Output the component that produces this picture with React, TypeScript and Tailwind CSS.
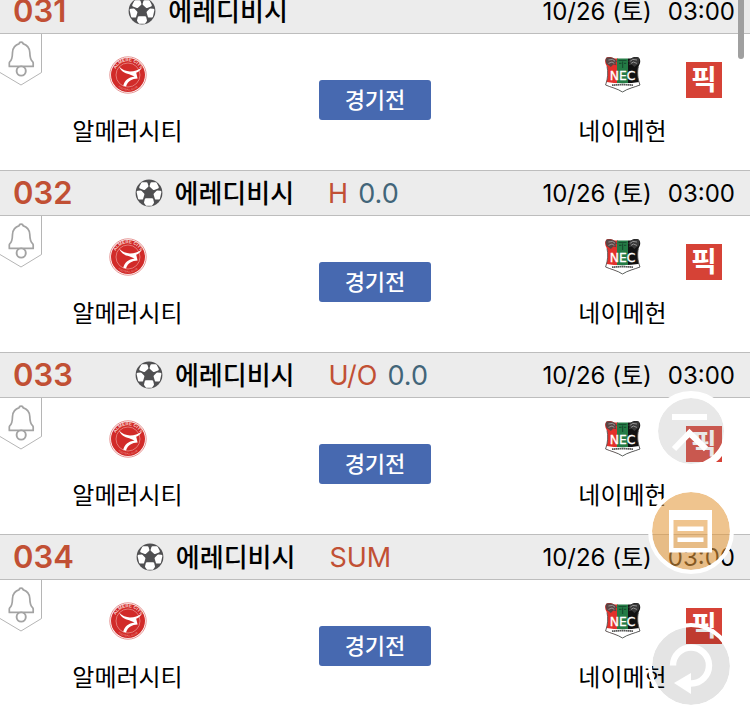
import React from 'react';

type Match = {
  no: string;
  type?: string;
  line?: string;
};

const matches: Match[] = [
  { no: '031' },
  { no: '032', type: 'H', line: '0.0' },
  { no: '033', type: 'U/O', line: '0.0' },
  { no: '034', type: 'SUM' },
];

const SoccerBall = () => (
  <svg viewBox="0 0 28 28" className="h-7 w-7 shrink-0" aria-hidden="true">
    <circle cx="14" cy="14" r="13.4" fill="#505052" />
    <g stroke="#fff" strokeWidth="2.4" strokeLinejoin="round" fill="#fff">
      <path d="M7.4 4.4 11.4 4.4 12.2 7.2 9.2 9.8 5.4 8.4Z" />
      <path d="M20.6 4.4 16.6 4.4 15.8 7.2 18.8 9.8 22.6 8.4Z" />
      <path d="M2.8 13 5.8 12.8 8.2 15.4 7 19.4 4.2 19.2Z" />
      <path d="M25.2 13 22.2 12.8 19.8 15.4 21 19.4 23.8 19.2Z" />
      <path d="M11 20.4H17L17.8 23.6 16.4 25.6H11.6L10.2 23.6Z" />
    </g>
  </svg>
);

const AlarmTag = () => (
  <button type="button" aria-label="알림" className="block h-[52px] w-[42px]">
    <svg viewBox="0 0 42 52" className="h-full w-full" fill="none">
      <path d="M41.5 0V38.5L21 51 0 38.5" stroke="#b5b5b5" />
      <path
        d="M19.3 9.6C19.3 7.6 22.9 7.6 22.9 9.6C27 10.8 29.6 13.8 29.8 18.5C29.9 23.5 30.6 26 32.6 27.6Q33.2 28.2 33.2 29V32.4H9.3V29Q9.3 28.2 9.9 27.6C11.9 26 12.4 23.5 12.5 18.5C12.7 13.8 15.2 10.8 19.3 9.6Z"
        stroke="#a3a3a3"
        strokeWidth="1.7"
        strokeLinejoin="round"
      />
      <circle cx="21.2" cy="37" r="4.6" stroke="#a3a3a3" strokeWidth="1.9" fill="#fff" />
    </svg>
  </button>
);

const AlmereLogo = () => (
  <svg viewBox="0 0 38 38" className="h-[38px] w-[38px]" role="img" aria-label="Almere City">
    <defs>
      <path id="almere-top" d="M5.3 19A13.7 13.7 0 0 1 32.7 19" />
      <path id="almere-bottom" d="M3.4 19A15.6 15.6 0 0 0 34.6 19" />
    </defs>
    <circle cx="19" cy="19" r="18.2" fill="#fff" stroke="#e07a78" strokeWidth=".8" />
    <circle cx="19" cy="19" r="17" fill="#d12b29" />
    <circle cx="19" cy="19" r="12" fill="none" stroke="#eb9c99" strokeWidth=".7" />
    <text fill="#f8d3d1" fontSize="4.5" fontFamily="Liberation Sans, sans-serif" fontWeight="bold">
      <textPath href="#almere-top" startOffset="50%" textAnchor="middle">
        ALMERE CITY
      </textPath>
    </text>
    <text fill="#ee9f9c" fontSize="2.6" fontFamily="Liberation Sans, sans-serif">
      <textPath href="#almere-bottom" startOffset="50%" textAnchor="middle">
        FOOTBALL CLUB
      </textPath>
    </text>
    <path
      d="M10 10.6C13.4 14.2 17 15.4 21 15.4C25.4 15.4 29 14.2 33 11.4C31.6 14 29.6 15.8 27.2 16.8L28.6 22.6C23 22.8 19 25 17 30.4L14.2 29.8C15.6 24.8 19 21.4 25.6 20.6L20.2 18.2C15.4 17.4 12 15.2 10 10.6Z"
      fill="#fff"
    />
  </svg>
);

const NecLogo = () => (
  <svg viewBox="0 0 38 38" className="h-[38px] w-[38px]" role="img" aria-label="NEC Nijmegen">
    <defs>
      <clipPath id="nec">
        <path d="M3 1.2C6 .6 8.6 1.2 10 2.5H27C28.4 1.2 31 .6 34 1.2C37 3 36.8 7 34.4 10.4C33.2 16 33.4 22 36 29C30 31.4 24 32.4 18.5 36C13 32.4 7 31.4 1.6 29C4 22 4.2 16 3 10.4C.6 7 .4 3 3 1.2Z" />
      </clipPath>
    </defs>
    <g clipPath="url(#nec)">
      <rect width="14" height="38" fill="#e3302b" />
      <rect x="13" width="11" height="38" fill="#247b45" />
      <rect x="24" width="14" height="38" fill="#111" />
      <path d="M0 25.5Q18.5 29 38 25.5V38H0Z" fill="#fff" />
    </g>
    <path d="M2.6 1.6Q8 .4 11 3L13 5.4 11.4 6.8 12.6 9.2 9.4 8.6 6.8 11 5 9.4 2.6 8Q.6 4 2.6 1.6Z" fill="#5a4444" />
    <path d="M34.6 1.6Q29 .4 26.2 3L24.2 5.4 25.8 6.8 24.6 9.2 27.8 8.6 30.4 11 32.2 9.4 34.6 8Q36.6 4 34.6 1.6Z" fill="#383838" />
    <path d="M4.4 4 8.6 3.4 11 5.2M4.5 7.4 8 6 10.3 7.4M33 4 28.8 3.4 26.2 5.2M32.9 7.4 29.4 6 27.1 7.4" stroke="#a9a9a9" strokeWidth=".8" fill="none" />
    <path d="M14.5 4.5H22.5M15 7.4H17.5M20 7.4H22.2M18.6 5.5V12" stroke="#174f30" strokeWidth="1.2" />
    <path d="M3 10.4C4.2 16 4 22 1.6 29C7 31.4 13 32.4 18.5 36C24 32.4 30 31.4 36 29C33.4 22 33.2 16 34.4 10.4" stroke="#555" strokeWidth=".9" fill="none" />
    <path d="M8 29.2Q18.5 28.2 29 29.2" stroke="#555" strokeWidth="1.7" strokeDasharray="1.6 .4" fill="none" />
    <text x="18.5" y="24" textAnchor="middle" fill="#fff" stroke="#fff" strokeWidth=".3" fontSize="12.4" fontFamily="DejaVu Sans, sans-serif">
      NEC
    </text>
  </svg>
);

const MatchRow: React.FC<{ match: Match }> = ({ match }) => (
  <li>
    <div className="flex h-[46px] items-center border-y border-[#bdbdbd] bg-[#ececec] pr-[15px] pl-[13px]">
      <span className="text-[31px] font-semibold text-[#c15034]">{match.no}</span>
      <span className="ml-[62px] flex items-center gap-3">
        <SoccerBall />
        <strong className="text-[26px] font-medium">에레디비시</strong>
      </span>
      <span className="ml-[34px] flex gap-[10px] pt-0.5 text-[27px]">
        {match.type && <span className="text-[#c15034]">{match.type}</span>}
        {match.line && <span className="text-[#426579]">{match.line}</span>}
      </span>
      <time className="ml-auto flex gap-4 pt-0.5 text-2xl">
        <span>10/26 (토)</span>
        <span>03:00</span>
      </time>
    </div>

    <div className="grid h-[136px] grid-cols-[34%_1fr_34%] items-start">
      <div className="grid grid-cols-[1fr_auto_1fr] items-start">
        <AlarmTag />
        <div className="mt-[22px]">
          <AlmereLogo />
        </div>
        <p className="col-span-3 mt-5 text-center text-2xl leading-9">알메러시티</p>
      </div>
      <button
        type="button"
        className="mt-[46px] h-10 w-28 justify-self-center rounded-[3px] bg-[#4769b0] text-[22px] font-medium text-white"
      >
        경기전
      </button>
      <div className="grid grid-cols-[1fr_auto_1fr] items-start">
        <div className="col-start-2 mt-[22px]">
          <NecLogo />
        </div>
        <button
          type="button"
          className="mt-7 mr-7 h-9 w-9 justify-self-end bg-[#d64236] text-[28px] leading-9 font-bold text-white"
        >
          픽
        </button>
        <p className="col-span-3 mt-4 text-center text-2xl leading-9">네이메헌</p>
      </div>
    </div>
  </li>
);

const FloatingMenu = () => (
  <nav className="fixed right-4 bottom-[5px] flex flex-col items-center">
    <button
      type="button"
      aria-label="맨 위로"
      className="mb-[17px] h-20 w-20 rounded-full border-[7px] border-white bg-[rgba(158,158,158,0.24)] bg-clip-padding"
    >
      <svg viewBox="0 0 66 66" className="h-full w-full" fill="none" stroke="#fff">
        <path d="M14 19H49" strokeWidth="6" />
        <path d="M16 51 31.5 35 48 51" strokeWidth="6" />
      </svg>
    </button>
    <button
      type="button"
      aria-label="게시판"
      className="mb-[49px] h-[86px] w-[86px] rounded-full border-4 border-white bg-[rgba(228,153,60,0.58)] bg-clip-padding"
    >
      <svg viewBox="0 0 78 78" className="h-full w-full">
        <path d="M17 18H60V60.5H17ZM21.5 28V56H55.5V28Z" fill="#fff" fillRule="evenodd" />
        <path d="M25.5 36.8H51.5M25.5 47.8H51.5" stroke="#fff" strokeWidth="4.4" />
      </svg>
    </button>
    <button
      type="button"
      aria-label="새로고침"
      className="h-[86px] w-[86px] rounded-full border-4 border-white bg-[rgba(0,0,0,0.105)] bg-clip-padding"
    >
      <svg viewBox="0 0 78 78" className="h-full w-full">
        <path d="M21 38.5A18 18 0 1 1 39 56.5" fill="none" stroke="#fff" strokeWidth="6.4" />
        <path d="M22 56 39 46V67Z" fill="#fff" />
      </svg>
    </button>
  </nav>
);

const App: React.FC = () => {
  return (
    <main className="h-screen overflow-hidden bg-white font-['Inter','Noto_Sans_CJK_KR',sans-serif] text-black">
      <ul className="-mt-3">
        {matches.map(match => (
          <MatchRow key={match.no} match={match} />
        ))}
      </ul>
      <FloatingMenu />
      <div className="fixed top-0 right-[6px] h-[59px] w-[6px] rounded-b-full bg-[#a0a0a0]" />
    </main>
  );
};

export default App;
